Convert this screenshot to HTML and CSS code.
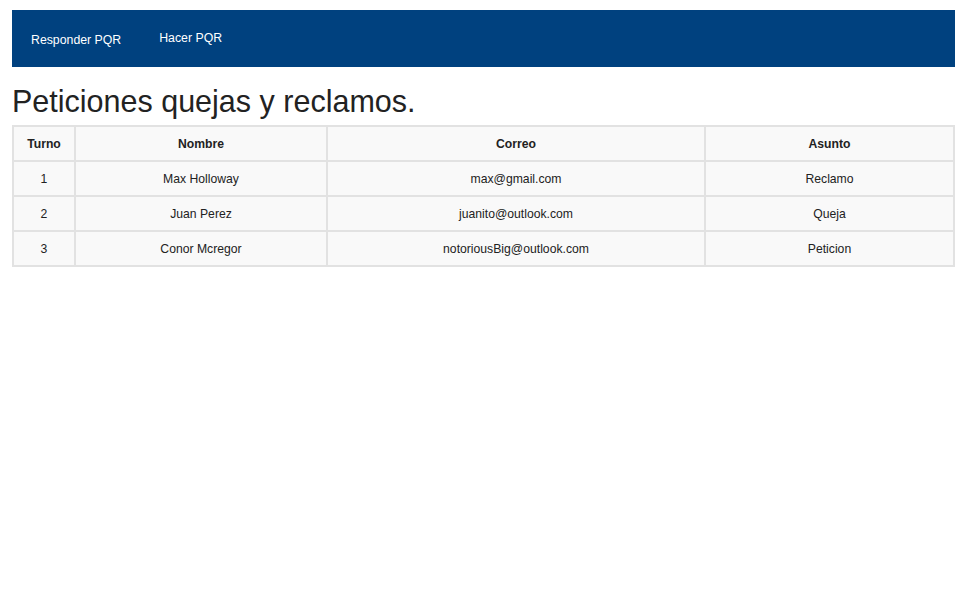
FILE: index.html
```html
<!DOCTYPE html>
<html lang="es">
<head>
<meta charset="utf-8">
<title>PQR</title>
<link rel="stylesheet" href="styles.css">
</head>
<body>
<div class="page">
  <nav class="nav">
    <a class="nav-link nav-link-a" href="#">Responder PQR</a>
    <a class="nav-link nav-link-b" href="#">Hacer PQR</a>
  </nav>
  <h1 class="title">Peticiones quejas y reclamos.</h1>
  <table class="pqr">
    <colgroup>
      <col class="c1"><col class="c2"><col class="c3"><col class="c4">
    </colgroup>
    <thead>
      <tr><th>Turno</th><th>Nombre</th><th>Correo</th><th>Asunto</th></tr>
    </thead>
    <tbody>
      <tr><td>1</td><td>Max Holloway</td><td>max@gmail.com</td><td>Reclamo</td></tr>
      <tr><td>2</td><td>Juan Perez</td><td>juanito@outlook.com</td><td>Queja</td></tr>
      <tr><td>3</td><td>Conor Mcregor</td><td>notoriousBig@outlook.com</td><td>Peticion</td></tr>
    </tbody>
  </table>
</div>
</body>
</html>
```
FILE: styles.css
```css
html, body {
  margin: 0;
  padding: 0;
  background: #ffffff;
}
body {
  font-family: "Liberation Sans", Arial, sans-serif;
  color: #222222;
}
.page {
  padding: 10px 15px 0 12px;
}
.nav {
  background: #00417f;
  height: 57px;
  display: flex;
  align-items: flex-start;
  padding-left: 19px;
  box-sizing: border-box;
}
.nav-link {
  color: #ffffff;
  text-decoration: none;
  font-size: 12.3px;
  line-height: 16px;
}
.nav-link-a {
  margin-top: 22px;
}
.nav-link-b {
  margin-top: 20px;
  margin-left: 38px;
}
.title {
  margin: 16px 0 6px 0;
  font-size: 30.5px;
  font-weight: normal;
  line-height: 36px;
  color: #222222;
}
.pqr {
  width: 100%;
  border-collapse: collapse;
  font-size: 12.2px;
  table-layout: fixed;
}
.c1 { width: 62px; }
.c2 { width: 252px; }
.c3 { width: 378px; }
.c4 { width: auto; }
.pqr th, .pqr td {
  background: #f9f9f9;
  border: 2px solid #e2e2e2;
  text-align: center;
  height: 33px;
  padding: 0;
  color: #222222;
}
.pqr th {
  font-weight: bold;
}
```
